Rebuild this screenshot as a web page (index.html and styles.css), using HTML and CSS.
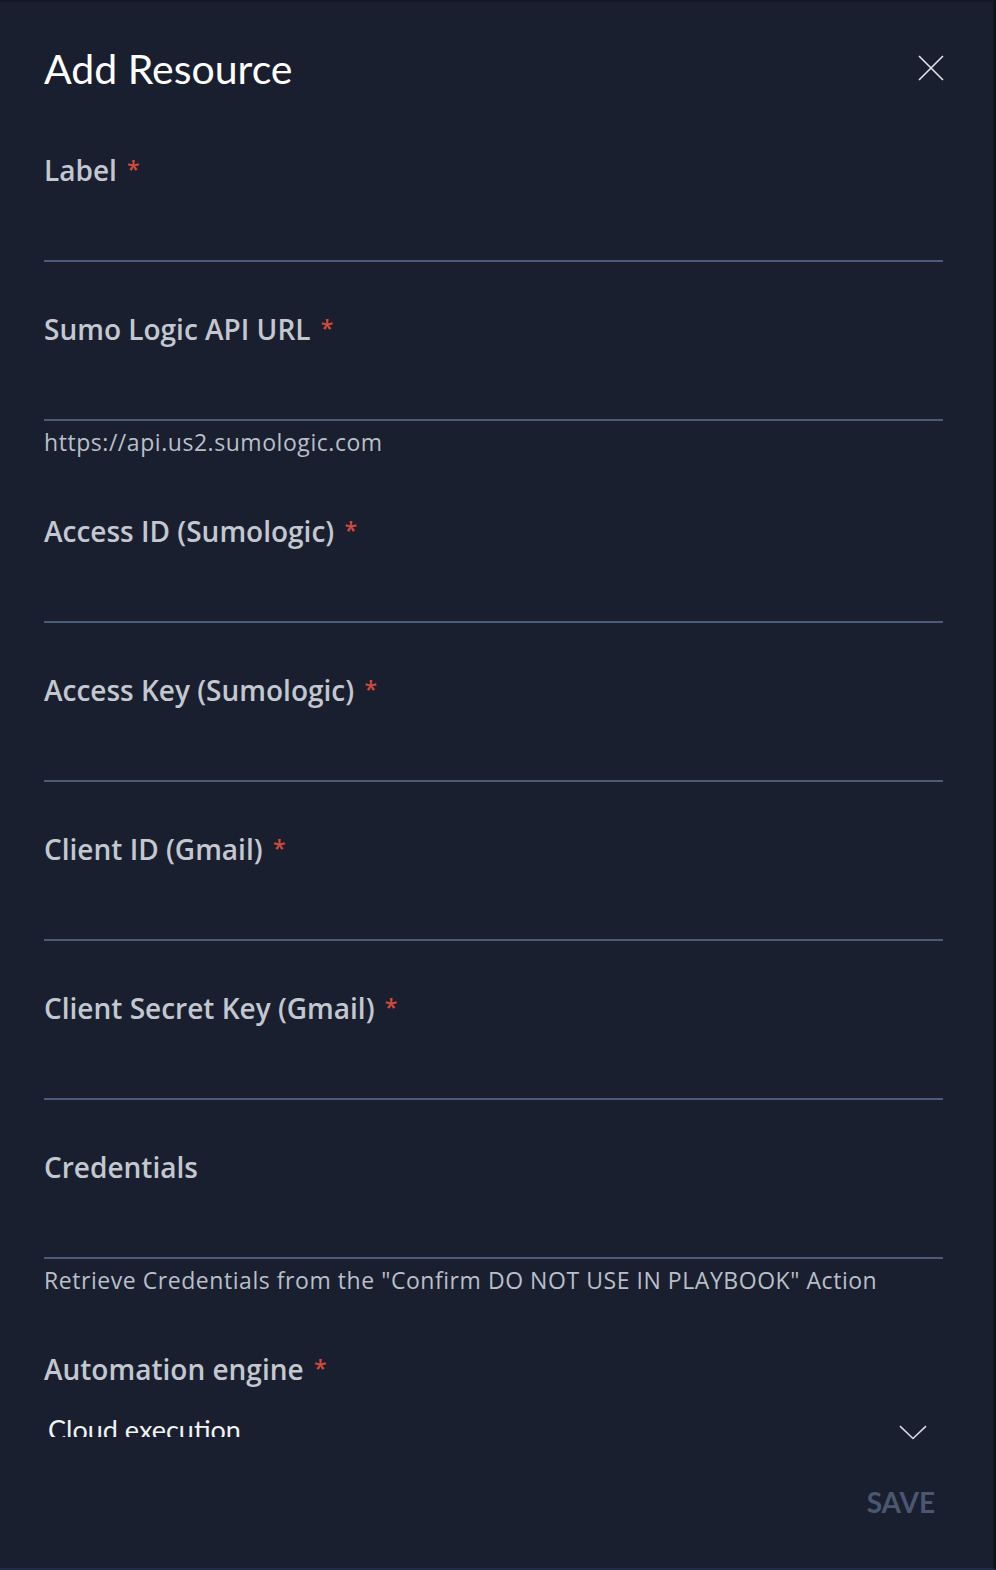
FILE: index.html
```html
<!DOCTYPE html>
<html lang="en">
<head>
<meta charset="utf-8">
<title>Add Resource</title>
<link rel="stylesheet" href="styles.css">
</head>
<body>
<div class="panel">
  <header class="header">
    <h1 class="title">Add Resource</h1>
    <button class="close" aria-label="Close">
      <svg width="26" height="26" viewBox="0 0 26 26"><path d="M1 1 L25 25 M25 1 L1 25" stroke="#e3e6eb" stroke-width="1.6" fill="none"/></svg>
    </button>
  </header>
  <form class="form">
    <div class="field">
      <label class="label">Label <span class="req">*</span></label>
      <div class="input"></div>
    </div>
    <div class="field">
      <label class="label">Sumo Logic API URL <span class="req">*</span></label>
      <div class="input"></div>
      <div class="helper">https://api.us2.sumologic.com</div>
    </div>
    <div class="field">
      <label class="label">Access ID (Sumologic) <span class="req">*</span></label>
      <div class="input"></div>
    </div>
    <div class="field">
      <label class="label">Access Key (Sumologic) <span class="req">*</span></label>
      <div class="input"></div>
    </div>
    <div class="field">
      <label class="label">Client ID (Gmail) <span class="req">*</span></label>
      <div class="input"></div>
    </div>
    <div class="field">
      <label class="label">Client Secret Key (Gmail) <span class="req">*</span></label>
      <div class="input"></div>
    </div>
    <div class="field">
      <label class="label">Credentials</label>
      <div class="input"></div>
      <div class="helper">Retrieve Credentials from the "Confirm DO NOT USE IN PLAYBOOK" Action</div>
    </div>
    <div class="field field-select">
      <label class="label">Automation engine <span class="req">*</span></label>
      <div class="select">
        <div class="select-clip"><span class="select-value">Cloud execution</span></div>
        <svg class="chev" width="28" height="15" viewBox="0 0 28 15"><path d="M1 1.2 L14 13.5 L27 1.2" stroke="#d6d9df" stroke-width="1.6" fill="none"/></svg>
      </div>
    </div>
  </form>
  <div class="actions">
    <button class="save" type="button">SAVE</button>
  </div>
</div>
</body>
</html>
```

FILE: styles.css
```css
* { box-sizing: border-box; }
html, body {
  margin: 0;
  padding: 0;
  background: #1a1f2f;
}
body {
  font-family: "Lato", "Open Sans", "Liberation Sans", sans-serif;
  color: #c3c8d0;
}
.panel {
  width: 996px;
  height: 1570px;
  background: #1a1f2f;
  border-top: 2px solid #141826;
  border-right: 3px solid #10141d;
  border-bottom: 2px solid #222c47;
  padding: 0 50px 0 44px;
  display: flex;
  flex-direction: column;
  overflow: hidden;
}
.header {
  display: flex;
  justify-content: space-between;
  align-items: flex-start;
  height: 152px;
}
.title {
  margin: 43px 0 0 0;
  font-family: "Lato", sans-serif;
  font-weight: 400;
  font-size: 41px;
  line-height: 48px;
  color: #ffffff;
}
.close {
  margin-top: 53px;
  margin-right: -1px;
  padding: 0;
  border: 0;
  background: none;
  width: 26px;
  height: 26px;
  display: flex;
}
.form {
  display: flex;
  flex-direction: column;
}
.field {
  display: flex;
  flex-direction: column;
  margin-bottom: 51px;
}
.label {
  display: block;
  height: 32px;
  font-family: "Open Sans", "Lato", sans-serif;
  font-weight: 600;
  font-size: 28px;
  line-height: 32px;
  color: #c3c8d0;
}
.req {
  color: #d44a3a;
  margin-left: 3px;
  font-size: 23px;
  line-height: 0;
  vertical-align: 3px;
}
.input {
  height: 76px;
  border-bottom: 2px solid #4b5a78;
}
.helper {
  padding-top: 8px;
  padding-bottom: 9px;
  font-family: "Open Sans", "Lato", sans-serif;
  font-size: 23px;
  letter-spacing: 0.55px;
  line-height: 26px;
  color: #b9bfc8;
  height: 43px;
  white-space: nowrap;
}
.field-select {
  margin-bottom: 0;
}
.select {
  height: 56px;
  display: flex;
  justify-content: space-between;
  align-items: flex-start;
  padding: 0 16px 0 4px;
}
.select-clip {
  height: 52px;
  overflow: hidden;
}
.select-value {
  display: block;
  margin-top: 29px;
  font-size: 27px;
  line-height: 32px;
  color: #f0f2f5;
}
.chev {
  margin-top: 40px;
}
.actions {
  display: flex;
  justify-content: flex-end;
  padding-top: 45px;
  padding-right: 8px;
}
.save {
  border: 0;
  background: none;
  padding: 0;
  font-family: inherit;
  font-weight: 700;
  font-size: 28px;
  line-height: 32px;
  color: #4b5670;
}
```
